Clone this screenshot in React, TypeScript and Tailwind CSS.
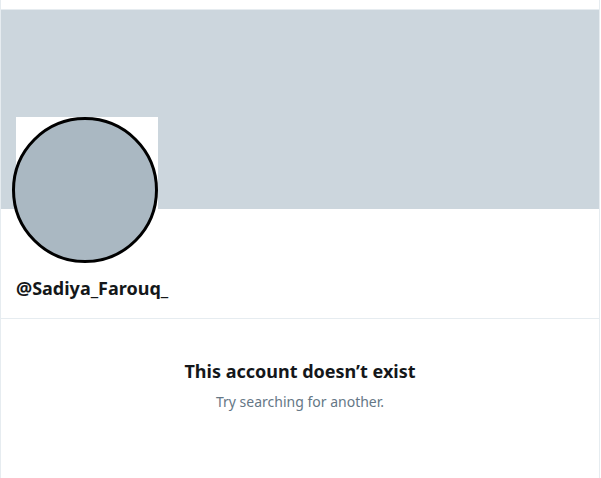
export default function App() {
  return (
    <div className="h-[478px] w-[601px] bg-white font-['Noto_Sans','Open_Sans',sans-serif]">
      <div className="h-full w-[600px] border-x border-[#e6ecf0]">
        {/* top strip */}
        <div className="h-[10px] border-b border-[#e6ecf0]" />

        {/* banner */}
        <div className="h-[199px] bg-[#ccd6dd]" />

        {/* avatar + handle */}
        <div className="px-[15px]">
          <div className="relative -mt-[92px] h-[145px] w-[142px] bg-white">
            <div className="absolute -left-[4px] top-0 h-[146px] w-[146px] rounded-full border-[3px] border-black bg-[#aab8c2]" />
          </div>
          <div className="pt-[14px] pb-[18px] text-[18px] font-bold leading-[24px] text-[#14171a]">
            @Sadiya_Farouq_
          </div>
        </div>

        <div className="border-b border-[#e6ecf0]" />

        {/* empty state */}
        <div className="flex flex-col items-center pt-[40px]">
          <div className="text-[18px] font-bold leading-[24px] text-[#14171a]">
            This account doesn’t exist
          </div>
          <div className="mt-[9px] text-[14px] leading-[20px] text-[#657786]">
            Try searching for another.
          </div>
        </div>
      </div>
    </div>
  )
}
